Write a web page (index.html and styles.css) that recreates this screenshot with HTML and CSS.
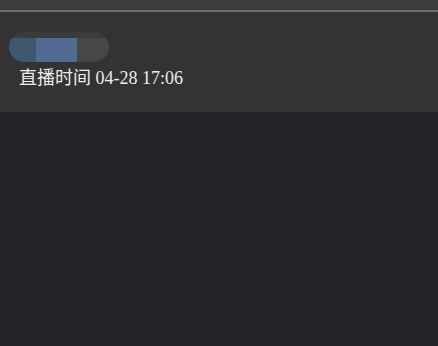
FILE: index.html
```html
<!DOCTYPE html>
<html>
<head>
<title>直播</title>
<link rel="stylesheet" href="styles.css">
</head>
<body>

<div class="topbar"></div>
<div class="panel">
  <div class="pill">
    <div class="seg seg-a"></div>
    <div class="seg seg-b"></div>
    <div class="seg seg-c"></div>
  </div>
  <div class="live-time">直播时间 04-28 17:06</div>
</div>
<div class="content"></div>

</body>
</html>
```

FILE: styles.css
```css
body {
  margin: 0;
  background-color: #232428;
  font-family: "Liberation Serif", "Noto Sans CJK SC", serif;
}
.topbar {
  height: 10px;
  background-color: #3d3d3d;
  border-bottom: 2px solid #6d6d6d;
}
.panel {
  height: 80px;
  padding: 20px 0 0 9px;
  background-color: #333333;
}
.pill {
  display: flex;
  width: 100px;
  height: 24px;
  padding-top: 6px;
  border-radius: 15px;
  overflow: hidden;
  background-color: #3a3b3c;
}
.seg {
  height: 24px;
}
.seg-a {
  width: 27px;
  background-color: #3e5870;
}
.seg-b {
  width: 41px;
  background-color: #506a91;
}
.seg-c {
  flex: 1;
  background-color: #474747;
}
.live-time {
  margin: 4px 0 0 10px;
  font-size: 18px;
  line-height: 24px;
  color: #ececec;
}
.content {
  height: 234px;
}
```
